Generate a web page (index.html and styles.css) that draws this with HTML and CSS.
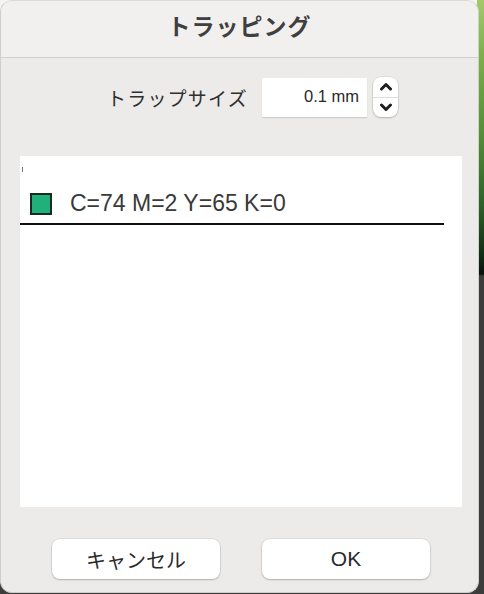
FILE: index.html
```html
<!DOCTYPE html>
<html lang="ja">
<head>
<meta charset="utf-8">
<title>トラッピング</title>
<link rel="stylesheet" href="styles.css">
</head>
<body>
<div class="desk">
  <div class="window">
    <div class="titlebar"><span class="title">トラッピング</span></div>
    <div class="size-row">
      <span class="label">トラップサイズ</span>
      <div class="input">0.1 mm</div>
      <div class="stepper">
        <div class="step">
          <svg width="14" height="9" viewBox="0 0 14 9"><path d="M2.5 7 L7 2.5 L11.5 7" fill="none" stroke="#1e1e1e" stroke-width="3" stroke-linecap="round" stroke-linejoin="round"/></svg>
        </div>
        <div class="step step-down">
          <svg width="14" height="9" viewBox="0 0 14 9"><path d="M2.5 2 L7 6.5 L11.5 2" fill="none" stroke="#1e1e1e" stroke-width="3" stroke-linecap="round" stroke-linejoin="round"/></svg>
        </div>
      </div>
    </div>
    <div class="list">
      <div class="tick"></div>
      <div class="item">
        <span class="swatch"></span>
        <span class="item-text">C=74 M=2 Y=65 K=0</span>
      </div>
    </div>
    <div class="buttons">
      <button class="btn">キャンセル</button>
      <button class="btn btn-ok">OK</button>
    </div>
  </div>
  <div class="strip"></div>
</div>
</body>
</html>
```

FILE: styles.css
```css
html, body {
  margin: 0;
  padding: 0;
}
body {
  width: 484px;
  height: 594px;
  overflow: hidden;
  background: #3c3c3c;
  font-family: "Liberation Sans", "Noto Sans CJK JP", sans-serif;
  color: #2e2e2e;
}
.desk {
  display: flex;
  width: 484px;
  height: 594px;
  background: linear-gradient(to bottom, #f4f4f2 0, #f4f4f2 20px, #3c3c3c 20px);
}
.window {
  flex: none;
  width: 479px;
  height: 593px;
  box-sizing: border-box;
  background: #ecebe9;
  border-radius: 12px;
  border: 1px solid #cfcecc;
  border-top-color: #dcdbd9;
  display: flex;
  flex-direction: column;
  overflow: hidden;
  position: relative;
  z-index: 1;
}
.strip {
  flex: none;
  width: 7px;
  margin-left: -2px;
  background: linear-gradient(to bottom, #a5c86a 0, #79ad46 60px, #4f8c33 140px, #2a5e26 210px, #0f2412 262px, #0a0f0a 274px, #3c3c3c 276px, #3c3c3c 100%);
}
.titlebar {
  height: 55px;
  flex: none;
  background: #f1f0ee;
  border-bottom: 1px solid #d2d1cf;
  display: flex;
  justify-content: center;
  align-items: center;
  padding-bottom: 1px;
  box-sizing: content-box;
}
.title {
  font-family: "Noto Sans CJK JP", sans-serif;
  font-weight: 700;
  font-size: 23px;
  color: #3f3f3f;
  letter-spacing: 1px;
  margin-top: -8px;
}
.size-row {
  display: flex;
  align-items: center;
  margin-top: 19px;
  padding-left: 106px;
  height: 40px;
}
.label {
  font-family: "Noto Sans CJK JP", sans-serif;
  font-size: 19px;
  color: #2f2f2f;
  letter-spacing: 1.2px;
  width: 155px;
}
.input {
  width: 105px;
  height: 39px;
  box-sizing: border-box;
  background: #ffffff;
  box-shadow: 0 1px 1px rgba(0,0,0,0.12);
  text-align: right;
  padding-right: 8px;
  font-size: 16.5px;
  line-height: 37px;
  color: #2a2a2a;
}
.stepper {
  margin-left: 6px;
  width: 25px;
  height: 40px;
  background: #ffffff;
  border-radius: 8px;
  box-shadow: 0 0 0 0.5px rgba(0,0,0,0.12), 0 1px 2px rgba(0,0,0,0.2);
  display: flex;
  flex-direction: column;
}
.step {
  flex: 1;
  display: flex;
  align-items: center;
  justify-content: center;
}
.step-down {
  border-top: 1px solid #dddddd;
}
.list {
  margin: 39px 0 0 19px;
  width: 442px;
  height: 351px;
  background: #ffffff;
  display: flex;
  flex-direction: column;
}
.tick {
  margin: 11px 0 0 2px;
  width: 1px;
  height: 5px;
  background: #777;
}
.item {
  margin-top: 15px;
  width: 424px;
  height: 38px;
  border-bottom: 2px solid #111111;
  box-sizing: border-box;
  display: flex;
  align-items: center;
  padding-left: 10px;
  padding-bottom: 2px;
}
.swatch {
  width: 22px;
  height: 22px;
  box-sizing: border-box;
  background: #20b07a;
  border: 2px solid #1a2a22;
}
.item-text {
  margin-left: 18px;
  font-size: 23px;
  color: #3a3a3a;
  margin-top: -2px;
}
.buttons {
  display: flex;
  gap: 42px;
  margin: 32px 0 0 51px;
}
.btn {
  width: 168px;
  height: 40px;
  border: none;
  border-radius: 8px;
  background: #ffffff;
  box-shadow: 0 0 0 0.5px rgba(0,0,0,0.1), 0 1px 2px rgba(0,0,0,0.22);
  font-family: "Liberation Sans", "Noto Sans CJK JP", sans-serif;
  font-size: 20px;
  color: #2a2a2a;
  padding: 0;
}
.btn-ok {
  font-size: 21px;
}
```
